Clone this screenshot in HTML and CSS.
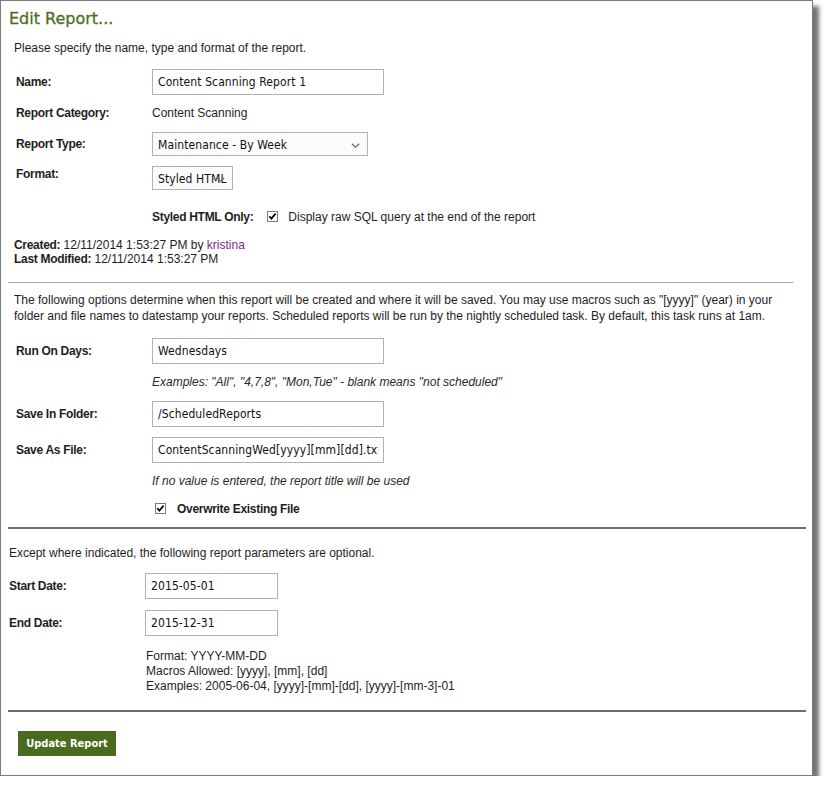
FILE: index.html
```html
<!DOCTYPE html>
<html>
<head>
<meta charset="utf-8">
<title>Edit Report</title>
<link rel="stylesheet" href="styles.css">
</head>
<body>
<div class="frame">
  <h1 class="title">Edit Report...</h1>

  <div class="sec sec-a">
    <p class="intro">Please specify the name, type and format of the report.</p>

    <div class="row row-name">
      <span class="lbl lbl-input">Name:</span>
      <input class="field" type="text" value="Content Scanning Report 1">
    </div>
    <div class="row row-cat">
      <span class="lbl">Report Category:</span>
      <span class="val">Content Scanning</span>
    </div>
    <div class="row row-type">
      <span class="lbl lbl-type">Report Type:</span>
      <div class="select select-type">Maintenance - By Week<svg class="chev" width="9" height="5" viewBox="0 0 9 5"><polyline points="0.8,0.8 4.5,4.2 8.2,0.8" fill="none" stroke="#6a6a6a" stroke-width="1.2"/></svg></div>
    </div>
    <div class="row row-format">
      <span class="lbl lbl-format">Format:</span>
      <div class="select select-format">Styled HTML<svg class="chev" width="9" height="5" viewBox="0 0 9 5"><polyline points="0.8,0.8 4.5,4.2 8.2,0.8" fill="none" stroke="#6a6a6a" stroke-width="1.2"/></svg></div>
    </div>

    <div class="opt"><b class="blbl">Styled HTML Only:</b><span class="cb"><svg width="9" height="9" viewBox="0 0 9 9"><polyline points="1.3,4.2 3.4,6.6 7.6,1.6" fill="none" stroke="#000" stroke-width="1.7"/></svg></span>Display raw SQL query at the end of the report</div>

    <div class="meta"><b class="blbl">Created:</b> 12/11/2014 1:53:27 PM by <a class="user">kristina</a><br><b class="blbl">Last Modified:</b> 12/11/2014 1:53:27 PM</div>
  </div>

  <hr class="rule rule-light">

  <div class="sec sec-b">
    <p class="para">The following options determine when this report will be created and where it will be saved. You may use macros such as "[yyyy]" (year) in your<br>folder and file names to datestamp your reports. Scheduled reports will be run by the nightly scheduled task. By default, this task runs at 1am.</p>

    <div class="row row-run">
      <span class="lbl lbl-input">Run On Days:</span>
      <input class="field" type="text" value="Wednesdays">
    </div>
    <p class="hint hint-run">Examples: "All", "4,7,8", "Mon,Tue" - blank means "not scheduled"</p>
    <div class="row row-folder">
      <span class="lbl lbl-input">Save In Folder:</span>
      <input class="field" type="text" value="/ScheduledReports">
    </div>
    <div class="row row-file">
      <span class="lbl lbl-input">Save As File:</span>
      <input class="field" type="text" value="ContentScanningWed[yyyy][mm][dd].txt">
    </div>
    <p class="hint hint-file">If no value is entered, the report title will be used</p>
    <div class="overwrite"><span class="cb cb-ow"><svg width="9" height="9" viewBox="0 0 9 9"><polyline points="1.3,4.2 3.4,6.6 7.6,1.6" fill="none" stroke="#000" stroke-width="1.7"/></svg></span><b class="blbl">Overwrite Existing File</b></div>
  </div>

  <hr class="rule rule-dark rule-mid">

  <div class="sec sec-c">
    <p class="intro3">Except where indicated, the following report parameters are optional.</p>
    <div class="row row-start">
      <span class="lbl lbl-input lbl-c">Start Date:</span>
      <input class="field field-date" type="text" value="2015-05-01">
    </div>
    <div class="row row-end">
      <span class="lbl lbl-input lbl-c">End Date:</span>
      <input class="field field-date" type="text" value="2015-12-31">
    </div>
    <p class="help">Format: YYYY-MM-DD<br>Macros Allowed: [yyyy], [mm], [dd]<br>Examples: 2005-06-04, [yyyy]-[mm]-[dd], [yyyy]-[mm-3]-01</p>
  </div>

  <hr class="rule rule-dark rule-end">

  <button class="btn" type="button">Update Report</button>
</div>
</body>
</html>
```

FILE: styles.css
```css
html, body {
  margin: 0;
  padding: 0;
  background: #ffffff;
}

body {
  font-family: "Liberation Sans", Arial, sans-serif;
  font-size: 12px;
  line-height: 15px;
  color: #1e1e1e;
}

.frame {
  box-sizing: border-box;
  width: 813px;
  height: 776px;
  border: 1px solid #7a7a7a;
  background: #ffffff;
  box-shadow: 6px 6px 4px rgba(0, 0, 0, 0.55);
}

.title {
  margin: 0;
  padding: 8px 0 0 8px;
  font-family: "DejaVu Sans", Verdana, sans-serif;
  font-weight: normal;
  font-size: 16px;
  line-height: 20px;
  color: #4d6d1f;
  -webkit-text-stroke: 0.3px #4d6d1f;
}

p {
  margin: 0;
}

.sec-a, .sec-b {
  padding-left: 13px;
}

.sec-c {
  padding-left: 8px;
}

.intro {
  margin-top: 12px;
}

.row {
  display: flex;
  align-items: flex-start;
}

.sec-a .row, .sec-b .row {
  padding-left: 2px;
}

.lbl {
  width: 136px;
  flex: none;
  font-weight: bold;
  letter-spacing: -0.3px;
}

.blbl {
  font-weight: bold;
  letter-spacing: -0.3px;
}

.lbl-input { padding-top: 6px; }
.lbl-type { padding-top: 5px; }
.lbl-format { padding-top: 1px; }

.field {
  box-sizing: border-box;
  width: 232px;
  height: 26px;
  margin: 0;
  padding: 0 5px;
  border: 1px solid #b2b2b2;
  border-radius: 0;
  background: #ffffff;
  font-family: "DejaVu Sans Condensed", "DejaVu Sans", sans-serif;
  font-stretch: condensed;
  font-size: 12px;
  letter-spacing: 0.1px;
  color: #111111;
  outline: none;
}

.field-date {
  width: 133px;
}

.select {
  position: relative;
  box-sizing: border-box;
  height: 24px;
  padding: 2px 0 0 5px;
  border: 1px solid #b2b2b2;
  background: #fbfbfb;
  font-family: "DejaVu Sans Condensed", "DejaVu Sans", sans-serif;
  font-stretch: condensed;
  font-size: 12px;
  letter-spacing: 0.1px;
  line-height: 21px;
  color: #111111;
  white-space: nowrap;
  overflow: hidden;
}

.select-type { width: 216px; }
.select-format { width: 81px; }

.chev {
  position: absolute;
  right: 7px;
  top: 10px;
}

.row-name { margin-top: 13px; }
.row-cat { margin-top: 11px; }
.row-type { margin-top: 11px; }
.row-format { margin-top: 10px; }

.opt {
  margin-top: 20px;
  padding-left: 138px;
  white-space: nowrap;
}

.cb {
  display: inline-block;
  box-sizing: border-box;
  width: 11px;
  height: 11px;
  border: 1px solid #7c7c7c;
  background: #ffffff;
  vertical-align: -1px;
  margin: 0 10px 0 14px;
}

.cb svg {
  display: block;
}

.meta {
  margin-top: 13px;
  line-height: 14px;
}

.user {
  color: #7f2a85;
  text-decoration: none;
}

.rule {
  display: block;
  border: 0;
  padding: 0;
}

.rule-light {
  margin: 16px 0 0 7px;
  width: 785px;
  height: 1px;
  background: #a8a8a8;
}

.rule-dark {
  margin-left: 7px;
  margin-right: 0;
  margin-bottom: 0;
  width: 798px;
  height: 2px;
  background: #6e6e6e;
}

.rule-mid { margin-top: 10px; }
.rule-end { margin-top: 16px; }

.para {
  margin-top: 9px;
  line-height: 16px;
  white-space: nowrap;
}

.row-run { margin-top: 14px; }
.row-folder { margin-top: 11px; }
.row-file { margin-top: 10px; }

.hint {
  padding-left: 138px;
  font-style: italic;
  color: #2a2a2a;
}

.hint-run { margin-top: 11px; }
.hint-file { margin-top: 11px; }

.overwrite {
  display: flex;
  align-items: flex-start;
  margin-top: 13px;
  padding-left: 141px;
}

.cb-ow {
  flex: none;
  margin: 1px 11px 0 0;
}

.intro3 {
  margin-top: 17px;
}

.row-start { margin-top: 12px; }
.row-end { margin-top: 11px; }

.help {
  margin-top: 13px;
  padding-left: 137px;
}

.btn {
  display: block;
  margin: 19px 0 0 17px;
  width: 98px;
  height: 25px;
  padding: 0;
  border: 0;
  border-radius: 0;
  background: #4a6a1e;
  color: #ffffff;
  font-family: "DejaVu Sans Condensed", "DejaVu Sans", sans-serif;
  font-stretch: condensed;
  font-weight: bold;
  font-size: 11px;
  cursor: pointer;
}
```
